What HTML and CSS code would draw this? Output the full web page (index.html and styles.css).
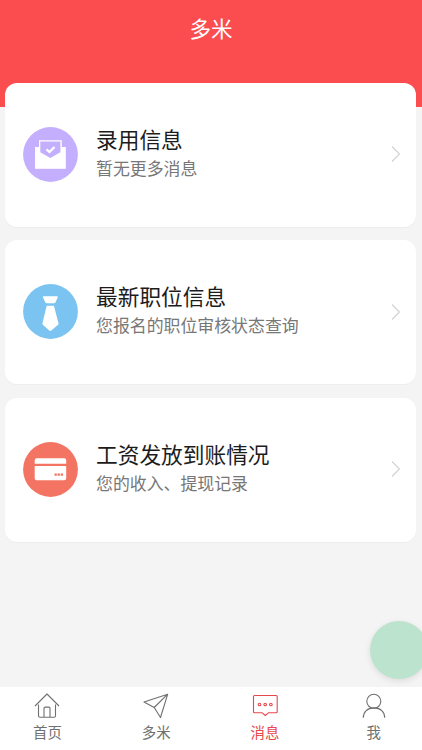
FILE: index.html
```html
<!DOCTYPE html>
<html lang="zh-CN">
<head>
<meta charset="utf-8">
<title>多米</title>
<link rel="stylesheet" href="styles.css">
</head>
<body>
<header class="header"><h1>多米</h1></header>
<main class="list">
  <section class="card">
    <svg class="badge" viewBox="0 0 55 55"><circle cx="27.5" cy="27.5" r="27.4" fill="#c3affd"/><path d="M12 20h30.800v21.800H12z" fill="#fff"/><path d="M16 13.200h22.800v13L27.300 32 16 26.200z" fill="#fff"/><path d="M17.300 14.600h20.100v10.700l-10.100 5.600-10-5.600z" fill="#c3affd"/><path d="m23.500 22.400 3 2.600 5-5" fill="none" stroke="#fff" stroke-width="2.300"/></svg>
    <div class="text"><h2>录用信息</h2><p>暂无更多消息</p></div>
    <svg class="arrow" viewBox="0 0 10 18"><path d="m1 1.500 7.500 7.500L1 16.500"/></svg>
  </section>
  <section class="card">
    <svg class="badge" viewBox="0 0 55 55"><circle cx="27.500" cy="27.500" r="27.400" fill="#7bc4f1"/><path d="M20.500 12.300h13.600q1 .2.600 1.300l-2.300 4.800q-.4.800-1.300.8h-7.400q-.9 0-1.300-.8L20 13.600q-.5-1.100.5-1.300zM23.700 21.700h7.200l4.600 17.500q.2.900-.4 1.500l-6.800 5.800q-1 .9-2 0l-6.500-5.800q-.6-.6-.4-1.500z" fill="#fff"/></svg>
    <div class="text"><h2>最新职位信息</h2><p>您报名的职位审核状态查询</p></div>
    <svg class="arrow" viewBox="0 0 10 18"><path d="m1 1.500 7.500 7.500L1 16.500"/></svg>
  </section>
  <section class="card">
    <svg class="badge" viewBox="0 0 55 55"><circle cx="27.500" cy="27.500" r="27.400" fill="#f37462"/><path d="M11.700 21.800v-3.600q0-2 2-2h27.500q2 0 2 2v3.600zM11.700 24h31.500v12.300q0 2-2 2H13.700q-2 0-2-2z" fill="#fff"/><path d="M31.500 32.700h8.600" stroke="#f37462" stroke-width="2.200" stroke-dasharray="2.300 .8"/></svg>
    <div class="text"><h2>工资发放到账情况</h2><p>您的收入、提现记录</p></div>
    <svg class="arrow" viewBox="0 0 10 18"><path d="m1 1.500 7.500 7.500L1 16.500"/></svg>
  </section>
</main>
<div class="float-button"></div>
<nav class="tabs">
  <a class="tab"><svg viewBox="0 0 26 26"><path d="m1 13 12-12 12 12M4.500 11.500v11.300q0 1.500 1.500 1.500h14q1.500 0 1.500-1.500V11.500M10 24.300v-9q0-1.200 1.200-1.200h3.600q1.200 0 1.200 1.200v9"/></svg><span>首页</span></a>
  <a class="tab"><svg viewBox="0 0 26 26"><path d="M1 9 24.700 1.200 17.500 24.500 11.200 14.500zM11.200 14.500 24.700 1.200"/></svg><span>多米</span></a>
  <a class="tab active"><svg viewBox="0 0 26 26"><path d="M2.500 2.500h21.700q1 0 1 1v15.200q0 1-1 1h-7.500L13.300 22.500 9.900 19.700H2.500q-1 0-1-1V3.500q0-1 1-1z"/><circle cx="7.500" cy="11.500" r="1.300"/><circle cx="13.200" cy="11.500" r="1.300"/><circle cx="18.900" cy="11.500" r="1.300"/></svg><span>消息</span></a>
  <a class="tab"><svg viewBox="0 0 26 26"><circle cx="12.800" cy="8.300" r="7"/><path d="M2.300 24.800c0-6 4.200-9.900 10.700-9.900s10.700 3.900 10.700 9.900"/></svg><span>我</span></a>
</nav>
</body>
</html>
```

FILE: styles.css
```css
* { box-sizing: border-box; }
body {
  margin: 0;
  height: 750px;
  display: flex;
  flex-direction: column;
  overflow: hidden;
  background: #f4f4f4;
  font-family: "Noto Sans CJK SC", sans-serif;
}
h1, h2, p { margin: 0; font-weight: 400; }
.header {
  height: 106.5px;
  flex: none;
  padding-top: 12px;
  background: #fb4d50;
  color: #fff;
  text-align: center;
}
.header h1 { font-size: 21.6px; line-height: 32px; }
.list {
  flex: 1;
  margin: -24px 6px 0 5px;
  display: flex;
  flex-direction: column;
  gap: 13.500px;
}
.card {
  height: 144px;
  flex: none;
  display: flex;
  align-items: center;
  padding: 0 15px 0 18px;
  border-radius: 12px;
  background: #fff;
  box-shadow: 0 1px 1px rgba(0, 0, 0, .03);
}
.badge, .arrow { flex: none; margin-bottom: 1px; }
.badge { width: 55px; height: 55px; }
.text { flex: 1; margin-left: 18px; padding-bottom: 6px; }
.text h2 { margin-bottom: 1px; font-size: 21.700px; line-height: 31px; color: #1c1c1c; }
.text p { font-size: 16.900px; line-height: 26px; color: #777; }
.arrow {
  width: 10px;
  height: 18px;
  fill: none;
  stroke: #d2d2d2;
  stroke-width: 1.100;
}
.float-button {
  position: absolute;
  left: 370px;
  top: 621px;
  width: 58px;
  height: 58px;
  border-radius: 50%;
  background: #bce3cd;
  box-shadow: 0 2px 6px rgba(0, 0, 0, .1);
}
.tabs {
  height: 63px;
  flex: none;
  display: grid;
  grid-template-columns: repeat(4, 108.800px);
  margin-left: -7px;
  background: #fff;
}
.tab {
  display: flex;
  flex-direction: column;
  align-items: center;
  padding-top: 6px;
  color: #707070;
}
.tab svg {
  width: 26px;
  height: 26px;
  fill: none;
  stroke: currentColor;
  stroke-width: 1.100;
  stroke-linejoin: round;
}
.tab span { font-size: 14.400px; line-height: 22px; margin-top: 2px; }
.tab.active { color: #e6484d; }
```
